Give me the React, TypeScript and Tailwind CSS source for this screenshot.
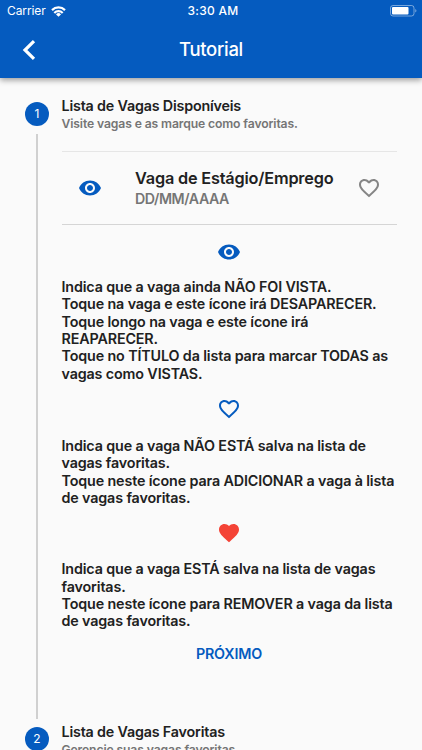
import { MdFavorite, MdFavoriteBorder, MdVisibility } from "react-icons/md"

function StatusBar() {
  return (
    <div className="grid h-[22px] grid-cols-3 items-center pl-[7px] pr-[5px] text-[12px] leading-[22px]">
      <div className="flex items-center gap-[5px]">
        <span className="tracking-[-0.1px]">Carrier</span>
        <svg className="h-[11px] w-[15px]" viewBox="0 0 15 11" fill="none" stroke="currentColor" strokeWidth="2.2">
          <path d="M1 4.1a9.2 9.2 0 0 1 13 0" />
          <path d="M3.3 6.9a5.9 5.9 0 0 1 8.4 0" />
          <path d="M7.5 10.8 5 8.4a3.5 3.5 0 0 1 5 0z" fill="currentColor" stroke="none" />
        </svg>
      </div>
      <span className="pl-[2px] text-center font-medium tracking-[0.25px]">3:30 AM</span>
      <svg className="h-[12px] w-[27px] justify-self-end" viewBox="0 0 27 12" fill="none">
        <rect x="0.5" y="0.5" width="23.5" height="10.5" rx="2.5" stroke="#fff" strokeOpacity="0.45" />
        <rect x="2" y="2" width="16.5" height="7.5" rx="1" fill="#fff" />
        <path d="M25.3 4v3.6c1.5-.6 1.5-3 0-3.6z" fill="#fff" fillOpacity="0.5" />
      </svg>
    </div>
  )
}

function StepBadge({ number }: { number: number }) {
  return (
    <div className="flex h-6 w-6 shrink-0 items-center justify-center rounded-full bg-[#055bbf] text-[12px] text-white">
      {number}
    </div>
  )
}

function StepTitle({ title, subtitle }: { title: string; subtitle: string }) {
  return (
    <div className="whitespace-nowrap font-semibold">
      <h2 className="text-[14.3px] leading-[18px] tracking-[-0.18px]">{title}</h2>
      <p className="text-[12.2px] leading-[18px] tracking-[-0.13px] text-[#757575]">{subtitle}</p>
    </div>
  )
}

function Description({ lines }: { lines: string[] }) {
  return (
    <div className="whitespace-nowrap text-[14.3px] font-semibold leading-[17.35px] tracking-[-0.13px]">
      {lines.map((line) => (
        <p key={line}>{line}</p>
      ))}
    </div>
  )
}

export default function App() {
  return (
    <div className="flex h-[750px] w-[422px] flex-col overflow-hidden bg-[#fafafa] font-['Inter',sans-serif] text-[#212121]">
      <header className="z-10 h-[78px] shrink-0 bg-[#055bbf] text-white shadow-[0_2px_6px_rgba(0,0,0,0.4)]">
        <StatusBar />
        <div className="grid h-[55px] grid-cols-[60px_1fr_60px] items-center">
          <svg className="ml-[22px] h-[20px] w-[14px]" viewBox="0 0 14 20" fill="none" stroke="#fff" strokeWidth="3.2">
            <path d="M12 1.2 3 10l9 8.8" />
          </svg>
          <h1 className="text-center text-[18.5px] font-medium tracking-[-0.3px]">Tutorial</h1>
        </div>
      </header>

      <main className="shrink-0 pl-[25px] pr-[25px] pt-[19px]">
        <section className="flex h-[625px] gap-[13px]">
          <div className="flex w-6 shrink-0 flex-col items-center pt-[5px]">
            <StepBadge number={1} />
            <div className="mt-[8px] h-[585px] w-[1.5px] bg-[#d0d0d0]" />
          </div>
          <div className="-ml-[0.5px] w-[335px]">
            <StepTitle title="Lista de Vagas Disponíveis" subtitle="Visite vagas e as marque como favoritas." />

            <div className="mt-[18px] flex h-[74px] items-center border-b border-t border-b-[#d5d5d5] border-t-[#e6e6e6]">
              <MdVisibility className="ml-4 h-6 w-6 text-[#055bbf]" />
              <div className="ml-[33.5px] w-[211.5px] whitespace-nowrap font-semibold">
                <h3 className="text-[16.3px] leading-[22px] tracking-[-0.19px]">Vaga de Estágio/Emprego</h3>
                <p className="text-[14.2px] leading-[20px] tracking-[-0.45px] text-[#757575]">DD/MM/AAAA</p>
              </div>
              <MdFavoriteBorder className="ml-[10px] h-6 w-6 text-[#858585]" />
            </div>

            <MdVisibility className="mb-[14px] ml-[155.5px] mt-[15px] h-6 w-6 text-[#055bbf]" />
            <Description
              lines={[
                "Indica que a vaga ainda NÃO FOI VISTA.",
                "Toque na vaga e este ícone irá DESAPARECER.",
                "Toque longo na vaga e este ícone irá",
                "REAPARECER.",
                "Toque no TÍTULO da lista para marcar TODAS as",
                "vagas como VISTAS.",
              ]}
            />

            <MdFavoriteBorder className="mb-[15.4px] ml-[155.5px] mt-[15.4px] h-6 w-6 text-[#055bbf]" />
            <Description
              lines={[
                "Indica que a vaga NÃO ESTÁ salva na lista de",
                "vagas favoritas.",
                "Toque neste ícone para ADICIONAR a vaga à lista",
                "de vagas favoritas.",
              ]}
            />

            <MdFavorite className="mb-[15px] ml-[155.5px] mt-[15px] h-6 w-6 text-[#f44336]" />
            <Description
              lines={[
                "Indica que a vaga ESTÁ salva na lista de vagas",
                "favoritas.",
                "Toque neste ícone para REMOVER a vaga da lista",
                "de vagas favoritas.",
              ]}
            />

            <button className="mx-auto mt-[15px] block text-[14.3px] font-semibold leading-[18px] tracking-[-0.15px] text-[#055bbf]">
              PRÓXIMO
            </button>
          </div>
        </section>

        <section className="flex gap-[13px]">
          <div className="pt-[5px]">
            <StepBadge number={2} />
          </div>
          <div className="-ml-[0.5px] pt-px">
            <StepTitle title="Lista de Vagas Favoritas" subtitle="Gerencie suas vagas favoritas." />
          </div>
        </section>
      </main>
    </div>
  )
}
